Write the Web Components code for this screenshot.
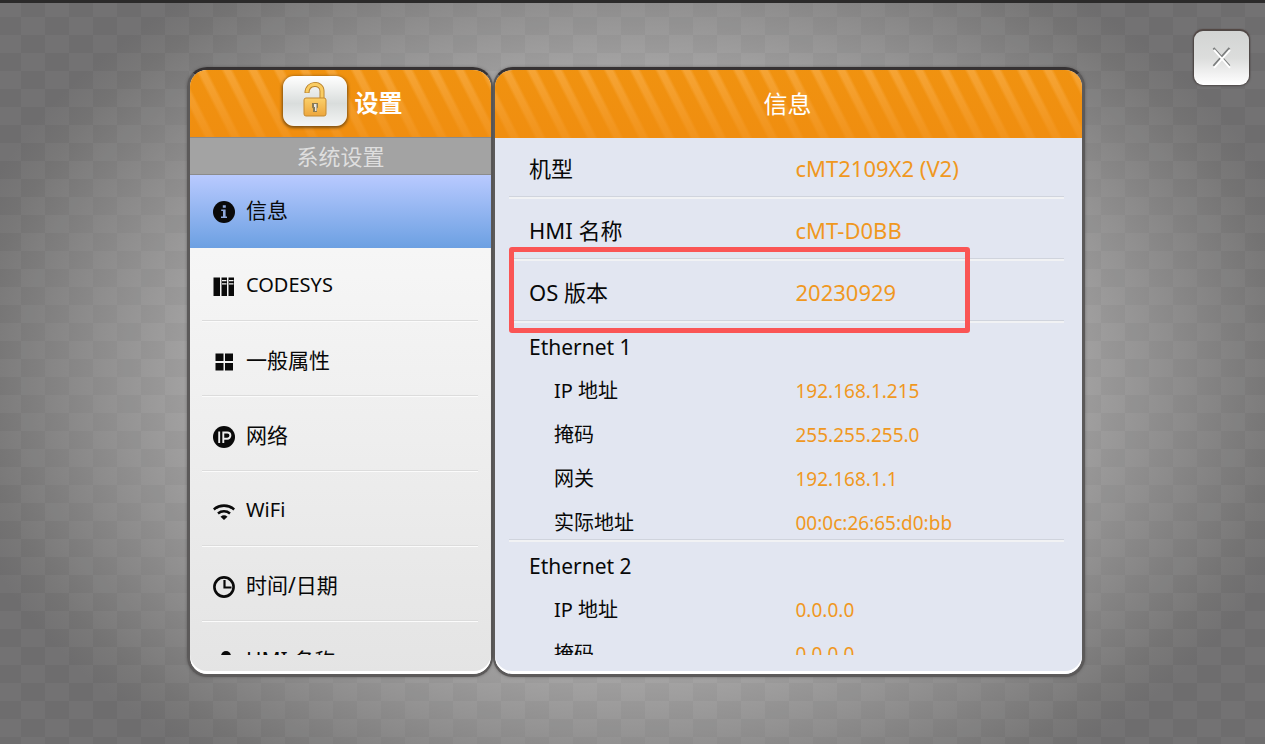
<!DOCTYPE html>
<html lang="zh-CN">
<head>
<meta charset="utf-8">
<title>系统设置</title>
<style>
html, body { margin: 0; height: 100%; }
body { font-family: "Noto Sans", "Noto Sans CJK SC", sans-serif; color: #080808; }
</style>
</head>
<body>
<settings-page></settings-page>

<script>
const define = (name, html) => {
  const template = document.createElement('template');
  template.innerHTML = html;
  customElements.define(name, class extends HTMLElement {
    constructor() {
      super();
      this.attachShadow({ mode: 'open' }).append(template.content.cloneNode(true));
    }
  });
};

const ICONS = {
  info: '<circle cx="11" cy="11" r="11"/><path d="M9.800 4.200h3v2.600h-3zM8.200 8.600h4.400v7H14V17H8v-1.400h2v-5.600H8.200z" fill="#8fa9dc"/>',
  books: '<path d="M0.500 1.500h6.500v18.500H0.500zM8.500 1.500h5.500v18.500H8.500zM15.500 1.500h5.500v18.500h-5.500z"/><path d="M9 4h4.500v1.200H9zM9 7.200h4.500v1.200H9zM16 4h4.500v1.200H16zM16 7.200h4.500v1.200H16z" fill="#f2f2f2"/>',
  grid: '<path d="M2.500 2.500h8v7.500h-8zM12 2.500h8v7.500h-8zM2.500 12h8v7.500h-8zM12 12h8v7.500h-8z"/>',
  ip: '<circle cx="11" cy="11" r="11"/><path d="M6.200 5.500v11.500M10.300 17v-10.500h4a3 3 0 0 1 0 6.200h-4" fill="none" stroke="#eee" stroke-width="1.900"/>',
  wifi: '<path d="M0.800 8.500a15.500 15.500 0 0 1 20.400 0M5 12.400a9.500 9.500 0 0 1 12 0" fill="none" stroke="#0a0a0a" stroke-width="2.600"/><path d="M7.500 15.700a5.500 5.500 0 0 1 7 0L11 19z"/>',
  clock: '<circle cx="11" cy="11" r="9.600" fill="none" stroke="#0a0a0a" stroke-width="2.600"/><path d="M11.500 4v7.500h7" fill="none" stroke="#0a0a0a" stroke-width="2.200"/>',
  user: '<circle cx="13" cy="5" r="5"/><path d="M2 22c0-12 20-12 20 0z"/>'
};

define('panel-box', `
<style>
:host { display: flex; flex-direction: column; min-width: 0; box-sizing: border-box; overflow: hidden;
  border: 3px solid #5c5a5a; border-top-color: #363233; border-radius: 20px;
  background: var(--panel-bg); box-shadow: 0 0 3px rgba(60,58,58,.5); position: relative; }
:host::after { content: ""; position: absolute; inset: 0; border-radius: 17px; box-shadow: inset 0 -3px 0 #fff; pointer-events: none; }
header { flex: none; height: var(--header-height, 67px); display: flex; align-items: center; justify-content: center; box-sizing: border-box;
  color: #fff; font-size: 24px; line-height: 36px;
  background:
    linear-gradient(to bottom, rgba(242,148,22,.1) 0%, rgba(240,140,16,.7) 100%),
    repeating-linear-gradient(63deg, #f0920f 0 12px, #f6a638 15px 20px, #f0920f 23px); }
.body { flex: 1; min-height: 0; overflow: hidden; margin-bottom: 19px; }
</style>
<header><slot name="header"></slot></header>
<div class="body"><slot></slot></div>`);

define('lock-button', `
<style>
:host { display: block; }
button { display: grid; place-items: center; width: 64px; height: 50px; padding: 0; border: 0; border-radius: 11px;
  background: linear-gradient(#fff, #d9dddc 55%, #f4f5f5); box-shadow: 0 1px 3px 1px rgba(90,60,20,.75); }
svg { display: block; }
</style>
<button aria-label="解锁">
<svg width="26" height="38" viewBox="0 0 26 38">
<defs><linearGradient id="g" x2="0" y2="1"><stop offset="0" stop-color="#fbd06a"/><stop offset="1" stop-color="#eda63c"/></linearGradient></defs>
<path d="M5 11C5 0 20 0 20 9v8" fill="none" stroke="#b8812c" stroke-width="5"/>
<path d="M5 10.600C5 0 20 0 20 9v8" fill="none" stroke="#f9cc62" stroke-width="3.200"/>
<rect x="2" y="16" width="22" height="18" rx="2" fill="url(#g)" stroke="#c58a30"/>
<path d="M10 21h6v4.500l-1 1v3.500h-4v-3.500l-1-1z" fill="#8a7a52"/><path d="M12 22h2.500v7H13v-4h-1z" fill="#e6e6e6"/>
</svg></button>`);

define('close-button', `
<style>
:host { display: block; }
button { display: grid; place-items: center; width: 55px; height: 54px; padding: 0; border: 0; border-radius: 9px;
  background: linear-gradient(#d2d4d3, #dcdddc 50%, #f2f2f2 80%, #fff); box-shadow: 0 0 2px 1px #4e4a4a, 0 -1px 1px 1px #54443f; }
</style>
<button aria-label="关闭">
<svg width="20" height="22" viewBox="0 0 20 22"><path d="M1.500 1l16 18M17.500 1l-16 18" stroke="#7c7e7e" stroke-width="2.200"/><path d="M2 2.800l16 18M18 2.800l-16 18" stroke="#fff" stroke-width="2"/></svg>
</button>`);

customElements.define('menu-item', class extends HTMLElement {
  constructor() {
    super();
    this.attachShadow({ mode: 'open' }).innerHTML = `
<style>
:host { display: block; margin: 0 13px 0 12px; border-bottom: 1px solid #dcdcdc; box-shadow: 0 1px 0 #fbfbfb; }
:host([active]) { margin: 0; border: 0; box-shadow: none; background: linear-gradient(#b9caff, #6ca0e2); }
button { display: flex; align-items: center; gap: 11px; width: 100%; padding: 24px 0 20px 11px; border: 0; background: none;
  font: inherit; color: inherit; font-size: 21px; line-height: 30px; text-align: left; }
:host([active]) button { padding: 20px 0 23px 23px; }
:host([lead]) button { padding-top: 22px; }
:host([latin]) button { font-size: 20px; }
svg { flex: none; position: relative; top: 2px; }
</style>
<button><svg width="22" height="22" viewBox="0 0 22 22" fill="#0a0a0a">${ICONS[this.getAttribute('icon')]}</svg><span><slot></slot></span></button>`;
  }
});

define('info-row', `
<style>
:host { display: grid; grid-template-columns: 1fr 1fr; padding: 17px 2px 13px 20px; font-size: 22px; line-height: 30px;
  border-bottom: 1px solid #d0d4dd; box-shadow: 0 2px 0 #f1f2f4; margin-bottom: 1px; position: relative; }
:host([lead]) { padding-top: 15px; }
.value { color: #f0981f; }
:host([marked])::after { content: ""; position: absolute; top: -13px; bottom: -13px; left: 0; width: 83%; box-sizing: border-box;
  border: 5px solid #fa5555; border-radius: 3px; z-index: 1; }
</style>
<div><slot></slot></div><div class="value"><slot name="value"></slot></div>`);

define('info-group', `
<style>
:host { display: block; padding: 3px 2px 0 20px; border-bottom: 1px solid #d0d4dd; box-shadow: 0 2px 0 #f1f2f4; margin-bottom: 1px; }
.title { font-size: 21px; line-height: 28px; padding: 8px 0; }
.items { margin-bottom: -6px; }
</style>
<div class="title"><slot name="title"></slot></div>
<div class="items"><slot></slot></div>`);

define('info-item', `
<style>
:host { display: grid; grid-template-columns: 1fr 1fr; font-size: 20px; line-height: 28px; padding: 8px 0; }
.label { padding-left: 25px; }
.value { color: #f0981f; font-size: 19px; }
</style>
<div class="label"><slot></slot></div><div class="value"><slot name="value"></slot></div>`);

define('settings-page', `
<style>
:host { display: block; height: 100vh; min-height: 400px; box-sizing: border-box; border-top: 3px solid #2b2a2a; position: relative;
  background:
    repeating-conic-gradient(rgba(0,0,0,.025) 0 25%, rgba(255,255,255,.01) 0 50%) -3px -4px / 48px 36px,
    radial-gradient(ellipse 55% 66% at 50% 50%, #b4b3b3 0%, #a4a3a3 62%, #8f8e8e 77%, #777676 94%, #717071 100%); }
close-button { position: absolute; top: 28px; right: 16px; }
main { display: grid; grid-template-columns: 306fr 592fr; height: 100%; box-sizing: border-box; padding: 64px 180px 67px 187px; }
.nav { --panel-bg: linear-gradient(#fff, #f6f6f6 30%, #e4e4e4); border-right-width: 2px; }
.info { --panel-bg: #e2e6f1; --header-height: 68px; border-left-width: 2px; }
h1, h2, h3 { margin: 0; font-size: 24px; line-height: 36px; font-weight: 400; }
h1 { font-weight: 700; padding-top: 4px; }
.title { display: flex; align-items: center; gap: 8px; margin-left: 4px; padding-bottom: 5px; }
h2 { padding-right: 2px; }
h3 { font-size: 22px; line-height: 36px; text-align: center; color: #dedede; background: #a3a3a3; border: 1px solid #8b8b8b; border-width: 1px 0; }
.list { padding: 0 18px 0 14px; }
</style>
<close-button></close-button>
<main>
  <panel-box class="nav">
    <div class="title" slot="header"><lock-button></lock-button><h1>设置</h1></div>
    <h3>系统设置</h3>
    <nav>
      <menu-item icon="info" active>信息</menu-item>
      <menu-item icon="books" lead latin>CODESYS</menu-item>
      <menu-item icon="grid">一般属性</menu-item>
      <menu-item icon="ip">网络</menu-item>
      <menu-item icon="wifi" latin>WiFi</menu-item>
      <menu-item icon="clock">时间/日期</menu-item>
      <menu-item icon="user">HMI 名称</menu-item>
    </nav>
  </panel-box>
  <panel-box class="info">
    <h2 slot="header">信息</h2>
    <div class="list">
      <info-row lead>机型<span slot="value">cMT2109X2 (V2)</span></info-row>
      <info-row>HMI 名称<span slot="value">cMT-D0BB</span></info-row>
      <info-row marked>OS 版本<span slot="value">20230929</span></info-row>
      <info-group>
        <span slot="title">Ethernet 1</span>
        <info-item>IP 地址<span slot="value">192.168.1.215</span></info-item>
        <info-item>掩码<span slot="value">255.255.255.0</span></info-item>
        <info-item>网关<span slot="value">192.168.1.1</span></info-item>
        <info-item>实际地址<span slot="value">00:0c:26:65:d0:bb</span></info-item>
      </info-group>
      <info-group>
        <span slot="title">Ethernet 2</span>
        <info-item>IP 地址<span slot="value">0.0.0.0</span></info-item>
        <info-item>掩码<span slot="value">0.0.0.0</span></info-item>
      </info-group>
    </div>
  </panel-box>
</main>`);
</script>
</body>
</html>
